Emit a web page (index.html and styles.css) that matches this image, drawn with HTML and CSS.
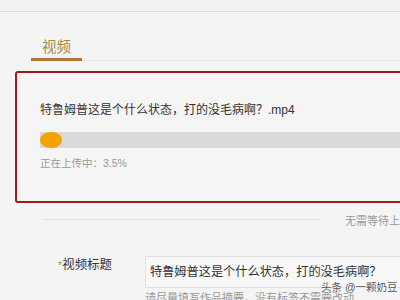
FILE: index.html
```html
<!DOCTYPE html>
<html lang="zh-CN">
<head>
<meta charset="utf-8">
<link rel="stylesheet" href="styles.css">
</head>
<body>
<div class="topbar"></div>
<div class="tabs">
  <div class="tab">视频</div>
  <div class="tabrest"></div>
</div>
<div class="upload-box">
  <div class="file-name">特鲁姆普这是个什么状态，打的没毛病啊？.mp4</div>
  <div class="progress"><div class="knob"></div></div>
  <div class="status">正在上传中：3.5%</div>
</div>
<div class="note-row">
  <div class="note-line"></div>
  <div class="note">无需等待上传完成，即可填写视频信息</div>
</div>
<div class="form-row">
  <div class="label"><span class="star">*</span>视频标题</div>
  <div class="field">
    <div class="input">特鲁姆普这是个什么状态，打的没毛病啊？</div>
    <div class="hint">请尽量填写作品摘要，没有标签不需要改动</div>
  </div>
</div>
<div class="watermark">头条 @一颗奶豆</div>
</body>
</html>
```
FILE: styles.css
```css
html, body {
  margin: 0;
  padding: 0;
  width: 400px;
  height: 300px;
  overflow: hidden;
  background: #f4f4f4;
  font-family: "Liberation Sans", "Noto Sans CJK SC", sans-serif;
  color: #333;
  position: relative;
}
.topbar {
  height: 11px;
  background: #f1f1f1;
  border-bottom: 1px solid #dadada;
}
.tabs {
  display: flex;
  align-items: flex-end;
  padding-top: 26px;
  padding-left: 31px;
}
.tab {
  flex: none;
  width: 51px;
  text-align: center;
  font-size: 14.5px;
  line-height: 18px;
  padding-bottom: 2px;
  color: #a8874a;
  border-bottom: 3px solid #b5733a;
}
.tabrest {
  flex: 1;
  border-bottom: 1px solid #e4e4e4;
}
.upload-box {
  margin-top: 10px;
  margin-left: 15px;
  width: 420px;
  border: 2px solid #9c1b1b;
  border-radius: 3px;
  padding: 29px 0 31px 23px;
  box-sizing: border-box;
  height: 132px;
  background: #f5f5f5;
}
.file-name {
  font-size: 12px;
  line-height: 16px;
  color: #333;
  white-space: nowrap;
}
.progress {
  margin-top: 14px;
  height: 16px;
  background: #d9d9d9;
  display: flex;
}
.knob {
  flex: none;
  width: 22px;
  height: 16px;
  border-radius: 50%;
  background: #f5a200;
}
.status {
  margin-top: 8px;
  font-size: 10.5px;
  line-height: 14px;
  color: #999;
}
.note-row {
  display: flex;
  align-items: flex-start;
  margin-top: 11px;
  margin-left: 42px;
  height: 14px;
}
.note-line {
  flex: none;
  width: 278px;
  height: 1px;
  margin-top: 5px;
  background: #e2e2e2;
}
.note {
  flex: none;
  margin-left: 25px;
  font-size: 11px;
  line-height: 14px;
  color: #999;
  white-space: nowrap;
}
.form-row {
  display: flex;
  margin-top: 28px;
}
.label {
  flex: none;
  width: 145px;
  padding-left: 58px;
  box-sizing: border-box;
  font-size: 12.4px;
  line-height: 16px;
  margin-top: 1px;
  color: #333;
  white-space: nowrap;
}
.star {
  color: #c0884a;
  font-size: 11px;
}
.field {
  flex: none;
}
.input {
  width: 400px;
  height: 29px;
  box-sizing: content-box;
  border: 1px solid #e0e0e0;
  background: #f8f8f8;
  padding-left: 4px;
  padding-top: 1px;
  font-size: 12.2px;
  line-height: 29px;
  color: #333;
  white-space: nowrap;
}
.hint {
  margin-top: 3px;
  font-size: 11px;
  line-height: 14px;
  color: #999;
  white-space: nowrap;
}
.watermark {
  position: absolute;
  left: 321px;
  top: 280px;
  font-size: 10.5px;
  line-height: 14px;
  color: #555;
  text-shadow: 0 0 2px #fff, 0 0 2px #fff;
  white-space: nowrap;
}
```
